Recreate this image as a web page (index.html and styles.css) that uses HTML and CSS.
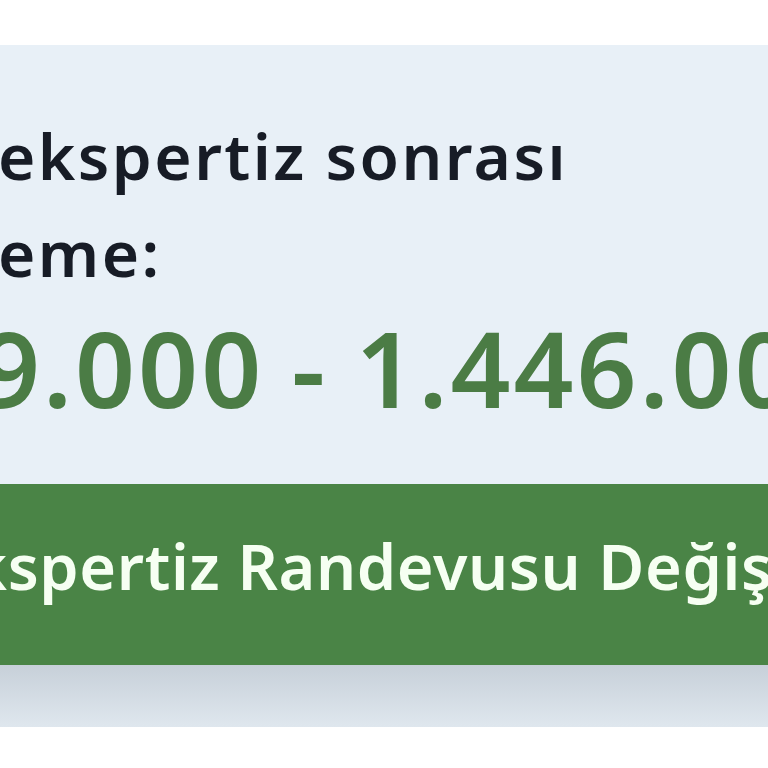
FILE: index.html
```html
<!DOCTYPE html>
<html lang="tr">
<head>
<meta charset="utf-8">
<link rel="stylesheet" href="styles.css">
</head>
<body>
<div class="top"></div>
<section class="panel">
  <p class="label">ekspertiz sonrası<br>eme:</p>
  <p class="price">9.000 - 1.446.000</p>
  <div class="btn">kspertiz Randevusu Değişikliği</div>
  <div class="shade"></div>
</section>
</body>
</html>
```
FILE: styles.css
```css
html, body {
  margin: 0;
  padding: 0;
  background: #ffffff;
  overflow: hidden;
}
body {
  width: 768px;
  height: 768px;
  font-family: "Noto Sans", "Open Sans", sans-serif;
}
.top {
  height: 45px;
  background: #ffffff;
}
.panel {
  background: #e8f0f7;
  padding-top: 62px;
  overflow: hidden;
}
.label {
  margin: 0 0 0 -2px;
  font-size: 64px;
  line-height: 97px;
  font-weight: 600;
  letter-spacing: 2.4px;
  color: #171c26;
  white-space: nowrap;
}
.price {
  margin: 0 0 50px -20px;
  font-size: 105px;
  line-height: 133px;
  font-weight: 600;
  letter-spacing: 3px;
  word-spacing: -3px;
  color: #4b7c45;
  white-space: nowrap;
}
.btn {
  height: 181px;
  box-sizing: border-box;
  padding: 50px 0 0 0;
  margin-left: -30px;
  background: #4a8446;
  color: #f6fff2;
  font-size: 63px;
  line-height: 63px;
  font-weight: 600;
  letter-spacing: 0.6px;
  white-space: nowrap;
}
.shade {
  height: 62px;
  background: linear-gradient(#c7d0d9, #dfe7ee);
}
```
